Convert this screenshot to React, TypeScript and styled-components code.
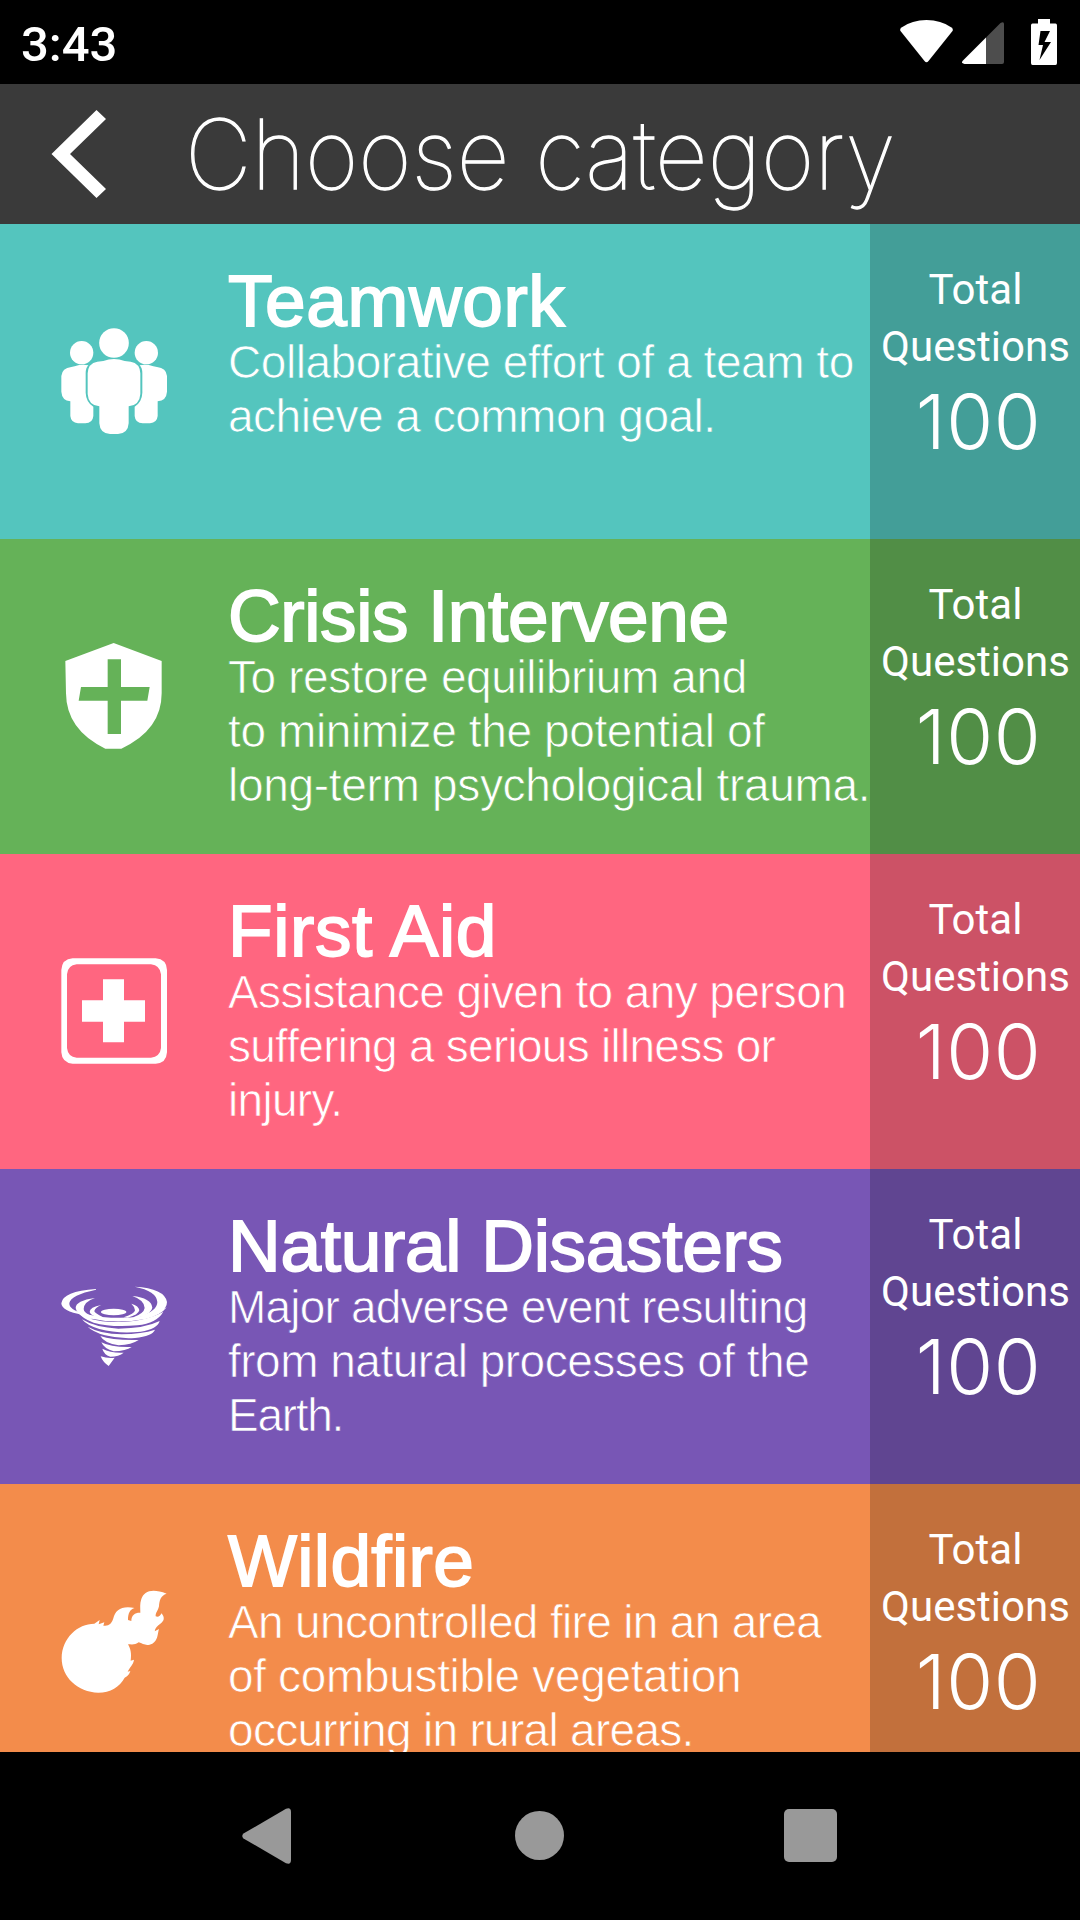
import React from 'react';
import styled, { createGlobalStyle } from 'styled-components';

const GlobalStyle = createGlobalStyle`
  html, body { margin: 0; padding: 0; background: #000; }
  * { box-sizing: border-box; }
`;

const Screen = styled.div`
  display: flex;
  flex-direction: column;
  width: 1080px;
  height: 1920px;
  overflow: hidden;
  background: #000;
  color: #fff;
`;

const StatusBar = styled.header`
  display: flex;
  flex: none;
  justify-content: space-between;
  height: 84px;
  padding: 0 23px 0 21px;
`;

const Clock = styled.time`
  font: 500 49px/89px Roboto, sans-serif;
  letter-spacing: 0;
`;

const StatusIcons = styled.div`
  display: flex;
  padding-top: 18px;

  svg { display: block; height: 48px; }
  svg + svg { margin-left: 9px; }
  svg:last-child { margin-left: 27px; }
`;

const TitleBar = styled.div`
  display: flex;
  flex: none;
  align-items: flex-start;
  height: 140px;
  padding-left: 51px;
  background: #3a3a3a;
`;

const BackButton = styled.button`
  display: block;
  width: 134px;
  padding: 26px 0 0;
  border: 0;
  background: none;
  text-align: left;

  svg { display: block; }
`;

const ScreenTitle = styled.h1`
  margin: 0;
  font: 100 96px/140px Inter, sans-serif;
  letter-spacing: 0;
  white-space: nowrap;
  -webkit-text-stroke: 1.3px #fff;
  transform: scaleX(0.957);
  transform-origin: left center;
`;

const CategoryList = styled.main`
  flex: 1;
  min-height: 0;
  overflow: hidden;
`;

const CategoryRow = styled.section<{ $bg: string }>`
  display: grid;
  grid-template-columns: 228px 642px 210px;
  height: 315px;
  background: ${(p) => p.$bg};
`;

const IconCell = styled.div`
  padding: 86px 0 0 40px;

  svg { display: block; }
`;

const Info = styled.div`
  padding-top: 43px;
  white-space: nowrap;
`;

const CategoryName = styled.h2<{ $spacing: number }>`
  margin: 0;
  font: 400 73px/68px "Liberation Sans", Arial, sans-serif;
  letter-spacing: ${(p) => p.$spacing}px;
  -webkit-text-stroke: 1.8px #fff;
`;

/* The outline in the row colour trims the strokes down to a light weight. */
const Line = styled.p<{ $spacing: number; $bg: string }>`
  margin: 0;
  font: 400 46px/54px "Liberation Sans", Arial, sans-serif;
  letter-spacing: ${(p) => p.$spacing}px;
  -webkit-text-stroke: 0.7px ${(p) => p.$bg};
`;

const Totals = styled.aside<{ $bg: string }>`
  padding-top: 37px;
  background: ${(p) => p.$bg};
  text-align: center;
`;

const TotalsLabel = styled.div`
  padding-left: 1px;
  font: 400 42px/57px Roboto, sans-serif;
  letter-spacing: 0;
`;

const TotalsValue = styled.div`
  padding-left: 7px;
  font: 300 76px/92px Inter, sans-serif;
  letter-spacing: 0.6px;
`;

const NavBar = styled.nav`
  display: flex;
  flex: none;
  align-items: center;
  height: 168px;
  padding: 0 0 1px 242px;
`;

const NavButton = styled.button<{ $gap: number }>`
  padding: 0;
  margin-right: ${(p) => p.$gap}px;
  border: 0;
  background: none;

  svg { display: block; fill: #999; }
`;

const TeamIcon = () => (
  <svg width="150" height="140" viewBox="0 0 450 420" fill="#fff">
    <circle cx="125" cy="128" r="35" />
    <circle cx="319" cy="128" r="35" />
    <path d="M104 169Q125 162 145 166Q137 174 137 190V248Q138 276 160 290V318Q158 340 136 340H114Q93 338 91 318V274Q66 272 64 245V198Q66 174 94 171Z" />
    <path d="M340 169Q319 162 299 166Q307 174 307 190V248Q306 276 284 290V318Q286 340 308 340H330Q351 338 353 318V274Q379 272 381 245V198Q379 174 351 171Z" />
    <circle cx="222" cy="99" r="44.500" />
    <path d="M190 153Q222 141 254 153L272 155Q300 160 301 190V252Q299 286 266 289V340Q264 371 234 372H210Q180 371 178 340V289Q145 286 143 252V190Q144 160 172 155Z" />
  </svg>
);

const ShieldIcon = () => (
  <svg width="150" height="140" viewBox="0 -15 450 420" fill="#fff">
    <path fillRule="evenodd" d="M221 39L365 93V190Q365 300 244 356H196Q79 300 78 190L76 93ZM203 88V171H123L116 212H203V312H243V212H322L329 171H243V88Z" />
  </svg>
);

const FirstAidIcon = () => (
  <svg width="150" height="140" viewBox="0 0 450 420" fill="#fff">
    <path fillRule="evenodd" d="M98 55H347Q380 58 381 90V337Q379 370 347 371H98Q66 369 64 337V90Q66 57 98 55ZM110 73Q83 76 81 103V324Q84 351 110 353H333Q360 350 363 324V103Q360 76 333 73Z" />
    <path d="M189 118H252V181H315V245H252V307H189V245H126V181H189Z" />
  </svg>
);

const TornadoIcon = () => (
  <svg width="150" height="140" viewBox="0 -15 450 420" fill="#fff">
    <path d="M168 89Q92 105 88 129Q86 149 132 161Q220 181 302 169Q350 158 380 142Q362 167 316 177Q230 193 156 176Q137 170 128 165Q64 153 64 130Q68 94 168 87Z" />
    <path d="M284 80Q374 85 381 126Q380 159 318 172L300 168Q352 153 352 126Q350 93 284 80Z" />
    <path d="M165 114Q107 122 107 144Q109 165 148 178L166 173Q130 160 131 147Q132 125 165 114Z" />
    <path d="M277 108Q334 114 337 143Q335 160 298 172L280 172Q312 160 314 144Q313 120 277 108Z" />
    <path d="M184 135Q149 141 149 156Q152 167 177 173L188 171Q162 158 163 153Q166 142 184 135Z" />
    <path d="M274 131Q297 138 298 151Q295 165 263 173L251 172Q284 161 285 151Q285 141 274 131Z" />
    <ellipse cx="221" cy="156" rx="38" ry="9.500" />
    <path d="M113 155Q145 184 222 186Q315 186 370 155Q350 190 292 196Q214 203 161 188Q126 175 113 155Z" />
    <path d="M126 178Q166 203 235 206Q315 205 359 183Q352 207 302 215Q235 222 178 207Q140 196 126 178Z" />
    <path d="M143 200Q182 222 245 223Q306 222 345 209Q337 228 285 234Q239 237 195 226Q158 215 143 200Z" />
    <path d="M181 228Q218 242 296 240Q275 254 236 256Q193 250 181 228Z" />
    <path d="M184 247Q214 263 275 261Q258 273 221 274Q193 267 184 247Z" />
    <path d="M187 266Q213 280 251 278Q237 290 211 290Q191 283 187 266Z" />
    <path d="M182 289Q204 296 224 293L206 318Q188 306 182 289Z" />
  </svg>
);

const FireballIcon = () => (
  <svg width="150" height="140" viewBox="0 0 450 420" fill="#fff">
    <path d="M65 264C66 204 113 161 163 161L179 150L176 163L193 157L190 167C206 170 216 160 220 145C226 119 246 106 284 114C270 118 264 130 264 150L274 153C274 134 287 127 301 128C301 113 299 101 304 87C312 64 335 54 380 71C362 76 358 92 357 109C355 120 346 129 347 139C354 142 361 139 364 130C376 143 372 154 361 161C353 167 345 173 344 184L357 177C352 194 354 211 337 221C319 229 310 222 296 217C286 226 272 223 264 223C272 237 275 251 272 272L282 269C280 284 269 292 263 305L271 303C267 316 260 320 254 323C239 350 211 368 175 368C113 367 65 321 65 264Z" />
  </svg>
);

interface Category {
  name: string;
  spacing: number;
  bg: string;
  dark: string;
  icon: React.FC;
  lines: [string, number][];
}

const categories: Category[] = [
  {
    name: 'Teamwork', spacing: 0.6, bg: '#54c5be', dark: '#439e98', icon: TeamIcon,
    lines: [['Collaborative effort of a team to', -0.46], ['achieve a common goal.', -0.5]],
  },
  {
    name: 'Crisis Intervene', spacing: -0.4, bg: '#65b258', dark: '#518e46', icon: ShieldIcon,
    lines: [['To restore equilibrium and', -0.4], ['to minimize the potential of', -0.38], ['long-term psychological trauma.', -0.31]],
  },
  {
    name: 'First Aid', spacing: 0.6, bg: '#ff6680', dark: '#cc5266', icon: FirstAidIcon,
    lines: [['Assistance given to any person', -0.62], ['suffering a serious illness or', -0.74], ['injury.', -0.7]],
  },
  {
    name: 'Natural Disasters', spacing: -0.3, bg: '#7856b5', dark: '#604591', icon: TornadoIcon,
    lines: [['Major adverse event resulting', -0.82], ['from natural processes of the', -0.5], ['Earth.', -1.3]],
  },
  {
    name: 'Wildfire', spacing: 0.35, bg: '#f38c4b', dark: '#c2703c', icon: FireballIcon,
    lines: [['An uncontrolled fire in an area', -0.66], ['of combustible vegetation', -0.34], ['occurring in rural areas.', -0.7]],
  },
];

export default function App() {
  return (
    <Screen>
      <GlobalStyle />
      <StatusBar>
        <Clock>3:43</Clock>
        <StatusIcons>
          <svg width="53" viewBox="0 0 53 48" fill="#fff">
            <path d="M0.500 13Q-0.500 11 1.500 9.500Q12 2 26.500 2T51.500 9.500Q53.500 11 52.500 13L28.500 43Q26.500 45.500 24.500 43Z" />
          </svg>
          <svg width="42" viewBox="0 0 42 48">
            <path fill="#4d4d4d" d="M24 19.500L38.500 5Q42 3 42 6V44Q42 46 40 46H24Z" />
            <path fill="#fff" d="M24 19.500V46H2.500Q-1 45.500 0.500 43Z" />
          </svg>
          <svg width="26" viewBox="0 0 26 48" fill="#fff">
            <path fillRule="evenodd" d="M7 1H19V5.500H24.500Q26 5.500 26 7.500V45Q26 47 24.500 47H1.500Q0 47 0 45V7.500Q0 5.500 1.500 5.500H7ZM9.500 13L7.500 27H12L8.500 42L20 24H13.500L19 13Z" />
          </svg>
        </StatusIcons>
      </StatusBar>

      <TitleBar>
        <BackButton aria-label="Back">
          <svg width="56" height="88" viewBox="0 0 56 88" fill="#fff">
            <path d="M45.500 0L55 9L19 44L55 79L45.500 88L0.500 44Z" />
          </svg>
        </BackButton>
        <ScreenTitle>Choose category</ScreenTitle>
      </TitleBar>

      <CategoryList>
        {categories.map(({ name, spacing, bg, dark, icon: Icon, lines }) => (
          <CategoryRow key={name} $bg={bg}>
            <IconCell><Icon /></IconCell>
            <Info>
              <CategoryName $spacing={spacing}>{name}</CategoryName>
              {lines.map(([text, s]) => (
                <Line key={text} $spacing={s} $bg={bg}>{text}</Line>
              ))}
            </Info>
            <Totals $bg={dark}>
              <TotalsLabel>Total<br />Questions</TotalsLabel>
              <TotalsValue>100</TotalsValue>
            </Totals>
          </CategoryRow>
        ))}
      </CategoryList>

      <NavBar>
        <NavButton $gap={224} aria-label="Back">
          <svg width="49" height="56" viewBox="0 0 49 56">
            <path d="M1.500 25.500L44 0.800Q49 -1 49 4V52Q49 57 44 55.200L1.500 30.500Q-1 28 1.500 25.500Z" />
          </svg>
        </NavButton>
        <NavButton $gap={220} aria-label="Home">
          <svg width="49" height="49" viewBox="0 0 49 49"><circle cx="24.500" cy="24.500" r="24.500" /></svg>
        </NavButton>
        <NavButton $gap={0} aria-label="Recent apps">
          <svg width="53" height="53" viewBox="0 0 53 53"><rect width="53" height="53" rx="5" /></svg>
        </NavButton>
      </NavBar>
    </Screen>
  );
}
